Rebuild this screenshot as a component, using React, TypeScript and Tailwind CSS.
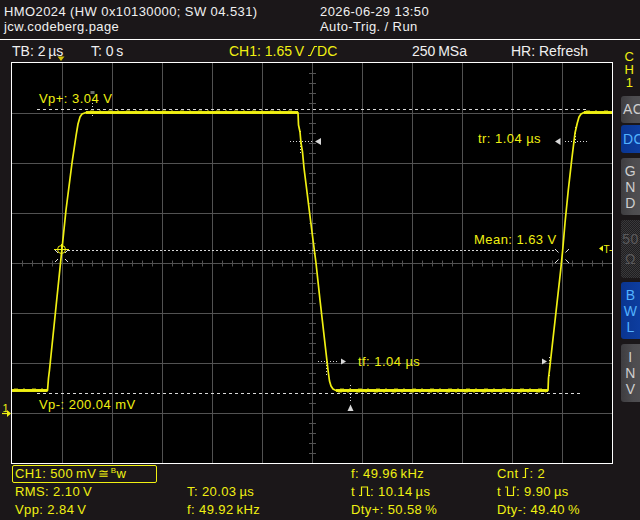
import type { ReactNode } from "react";

const YEL = "#f0f012";

type EdgeKind = "rise" | "pulsePos" | "pulseNeg" | "slope";

const EDGE_PATHS: Record<EdgeKind, string> = {
  rise: "M0.5 10.5 H3.5 V1.5 H6.5",
  pulsePos: "M0 10.5 H2.5 V2 H8.5 V10.5 H11",
  pulseNeg: "M0 2 H2.5 V10.5 H8.5 V2 H11",
  slope: "M0 10.5 H2.5 L6.5 1.5 H9",
};

function EdgeIcon({ kind, w = 11 }: { kind: EdgeKind; w?: number }) {
  return (
    <svg
      width={w}
      height={12}
      viewBox={`0 0 ${w} 12`}
      fill="none"
      stroke="currentColor"
      strokeWidth={1.2}
      className="inline-block align-[-1px]"
    >
      <path d={EDGE_PATHS[kind]} />
    </svg>
  );
}

// grey / blue softkeys on the right edge of the screen
function SideKey({ tone, h, mt, children }: { tone: "grey" | "blue" | "off"; h: number; mt: number; children: ReactNode }) {
  const toneClass =
    tone === "blue"
      ? "bg-[linear-gradient(90deg,#0a3590,#0f42a8)] text-[#52b2ff]"
      : tone === "grey"
        ? "bg-[linear-gradient(90deg,#3e3d40,#4d4c4f_40%,#545356)] text-[#cfcfcf]"
        : "bg-[image:repeating-conic-gradient(#3a393b_0_25%,#1f1e20_0_50%)] bg-[length:2px_2px] text-[#5a595b]";
  return (
    <div
      className={`ml-[1px] flex w-[30px] flex-col justify-center rounded-l-[3px] ${toneClass}`}
      style={{ height: h, marginTop: mt }}
    >
      {children}
    </div>
  );
}

function Stacked({ letters }: { letters: string }) {
  return (
    <div className="w-[19px] text-center text-[14px] leading-[16px]">
      {letters.split("").map((l, i) => (
        <div key={i}>{l}</div>
      ))}
    </div>
  );
}

const trace =
  "M12 390.5 L47.5 390.5 L48.5 378 L49.5 370 L60 268 L66 210 L72 163 L76 136 L78 124 L80 117 L82 114 L86 112.5 " +
  "L298 112.5 L298.5 125 L300 132 L301 143 L302.5 152 L304 168 L313 240 L316 263 L320 300 L328 370 L329.5 381 L331 386 L333 389 L336 390.5 " +
  "L548 390.5 L548.5 378 L549.5 370 L560.7 270 L562.7 250 L565 223 L568.3 190 L571.7 160 L575 133 L577.3 123 L579 117 L581 114 L584 112.5 L612 112.5";

function Scope() {
  const vLines = Array.from({ length: 11 }, (_, k) => 62.5 + 50 * k);
  const hLines = Array.from({ length: 7 }, (_, k) => 113.5 + 50 * k);
  const xTicks = Array.from({ length: 59 }, (_, i) => i + 1).filter((i) => i % 5 !== 0);
  const yTicks = Array.from({ length: 39 }, (_, j) => j + 1).filter((j) => j % 5 !== 0);
  const dot = "#d8d8d8";
  const label = { fontFamily: '"Liberation Sans", Arial, sans-serif', fontSize: 13, letterSpacing: 0.45, fill: YEL };

  return (
    <svg width={600} height={400} viewBox="12 63 600 400" className="block overflow-visible">
      <rect x={12} y={63} width={600} height={400} fill="#000" />
      {/* graticule */}
      <g stroke="#525252" strokeWidth={1}>
        {vLines.map((x) => (
          <line key={`v${x}`} x1={x} y1={63} x2={x} y2={463} />
        ))}
        {hLines.map((y) => (
          <line key={`h${y}`} x1={12} y1={y} x2={612} y2={y} />
        ))}
        {xTicks.map((i) => (
          <line key={`tx${i}`} x1={12.5 + 10 * i} y1={260.5} x2={12.5 + 10 * i} y2={266.5} />
        ))}
        {yTicks.map((j) => (
          <line key={`ty${j}`} x1={309} y1={63.5 + 10 * j} x2={316} y2={63.5 + 10 * j} />
        ))}
      </g>

      {/* cursor / measurement lines */}
      <g stroke={dot} strokeWidth={1} fill="none">
        <path d="M37 109.5 H586" strokeDasharray="3 3" />
        <path d="M68 250.5 H556" strokeDasharray="2 2" />
        <path d="M37 393.5 H581" strokeDasharray="3 3" />
        <path d="M565 141.5 H587" strokeDasharray="1 2" />
        <path d="M575.5 127 V145" strokeDasharray="1 2" />
        <path d="M290 141.5 H312" strokeDasharray="1 2" />
        <path d="M300.5 131 V153" strokeDasharray="1 2" />
        <path d="M326.5 356 V375" strokeDasharray="1 2" />
        <path d="M318 361.5 H339" strokeDasharray="1 2" />
        <path d="M350.5 385 V403" strokeDasharray="1 2" />
        <path d="M549.5 357 V378" strokeDasharray="1 2" />
        <path d="M92.5 103 V117" strokeDasharray="1 2" />
      </g>
      <g fill={dot}>
        <polygon points="555,141.5 560.5,138 560.5,145" />
        <polygon points="315,141.5 321,138 321,145" />
        <polygon points="347.5,411 350.5,404.5 353.5,411" />
        <polygon points="346,361.5 341,358.5 341,364.5" />
        <polygon points="547,361.5 542,358.5 542,364.5" />
        <rect x={90.5} y={91} width={4} height={3} fill="#6a6a6a" />
      </g>

      {/* trace */}
      <path d={trace} fill="none" stroke={YEL} strokeWidth={1.7} strokeLinejoin="round" />
      <g stroke={YEL} strokeWidth={3} opacity={0.95}>
        <line x1={12} y1={390.5} x2={47.5} y2={390.5} />
        <line x1={86} y1={112.5} x2={298} y2={112.5} />
        <line x1={336} y1={390.5} x2={548} y2={390.5} />
        <line x1={584} y1={112.5} x2={612} y2={112.5} />
      </g>
      <g stroke="#8c8c08" strokeWidth={1} strokeDasharray="4 5 2 7" opacity={0.7}>
        <line x1={14} y1={388.5} x2={46} y2={388.5} />
        <line x1={90} y1={110.5} x2={296} y2={110.5} />
        <line x1={338} y1={392.5} x2={546} y2={392.5} />
        <line x1={340} y1={388.5} x2={546} y2={388.5} />
        <line x1={586} y1={110.5} x2={611} y2={110.5} />
      </g>

      {/* mean crossings */}
      <g stroke="#e0e0e0" strokeWidth={1}>
        <path d="M55 250 L58 253 M68 250 L65 253 M55 262 L58 259 M68 262 L65 259" />
        <path d="M555 249 L558.5 252.5 M569 249 L565.5 252.5 M555 263 L558.5 259.5 M569 263 L565.5 259.5" />
      </g>
      <g stroke={YEL} strokeWidth={1} fill="none">
        <circle cx={61.5} cy={249.5} r={4} />
        <path d="M54 249.5 H69 M61.5 244 V255" />
      </g>

      {/* trigger level marker */}
      <polygon points="599,248.5 603,245.5 603,251.5" fill={YEL} />
      <text x={603.5} y={252.5} style={{ ...label, fontSize: 10, letterSpacing: 0 }}>
        T-
      </text>

      {/* channel 1 ground marker, left of the graticule */}
      <text x={2.5} y={411.5} style={{ ...label, fontSize: 11, letterSpacing: 0 }}>
        1
      </text>
      <path d="M2 413.5 H8" stroke={YEL} strokeWidth={1.2} />
      <polygon points="7,410 11,413.5 7,417" fill={YEL} />

      {/* trigger position marker, above the graticule */}
      <polygon points="57.5,56.5 64.5,56.5 61,61" fill="#d6c40a" />

      {/* measurement labels */}
      <text x={39} y={103} style={label}>
        Vp+: 3.04 V
      </text>
      <text x={478} y={143} style={label}>
        tr: 1.04 µs
      </text>
      <text x={474} y={244} style={label}>
        Mean: 1.63 V
      </text>
      <text x={358} y={366} style={label}>
        tf: 1.04 µs
      </text>
      <text x={39} y={409} style={label}>
        Vp-: 200.04 mV
      </text>
    </svg>
  );
}

export default function App() {
  return (
    <div className="h-[520px] w-[640px] overflow-hidden bg-[#1b1719] font-['Liberation_Sans',Arial,sans-serif] text-[13px] tracking-[0.4px] text-[#f0f0f0]">
      {/* header */}
      <div className="flex h-[40px] border-b border-white pt-[4px] leading-[15px]">
        <div className="w-[320px] pl-[4px]">
          <div>HMO2024 (HW 0x10130000; SW 04.531)</div>
          <div>jcw.codeberg.page</div>
        </div>
        <div>
          <div>2026-06-29 13:50</div>
          <div>Auto-Trig. / Run</div>
        </div>
      </div>

      <div className="flex">
        <div className="w-[620px]">
          <div className="flex h-[22px] items-center pl-[12px] text-[14px] tracking-normal">
            <span className="w-[79px]">{"TB: 2\u2009µs"}</span>
            <span className="w-[138px]">{"T: 0\u2009s"}</span>
            <span className="w-[183px] text-[#f0f012]">
              {"CH1: 1.65\u2009V "}
              <EdgeIcon kind="slope" w={9} />
              DC
            </span>
            <span className="w-[99px]">{"250\u2009MSa"}</span>
            <span>HR: Refresh</span>
          </div>
          <div className="ml-[11px] w-[602px] border border-white">
            <Scope />
          </div>
        </div>

        {/* channel softkeys */}
        <div className="flex w-[20px] flex-col pt-[10px]">
          <div className="w-[19px] text-center text-[13px] leading-[13px] text-[#f0f012]">
            <div>C</div>
            <div>H</div>
            <div>1</div>
          </div>
          <SideKey tone="grey" h={27} mt={7}>
            <span className="pl-[2px] text-[14px]">AC</span>
          </SideKey>
          <SideKey tone="blue" h={28} mt={2}>
            <span className="pl-[2px] text-[14px]">DC</span>
          </SideKey>
          <SideKey tone="grey" h={57} mt={5}>
            <Stacked letters="GND" />
          </SideKey>
          <SideKey tone="off" h={58} mt={5}>
            <div className="w-[19px] text-center text-[14px] leading-[20px]">
              <div>50</div>
              <div>Ω</div>
            </div>
          </SideKey>
          <SideKey tone="blue" h={57} mt={4}>
            <Stacked letters="BWL" />
          </SideKey>
          <SideKey tone="grey" h={58} mt={5}>
            <Stacked letters="INV" />
          </SideKey>
        </div>
      </div>

      {/* measurement readout */}
      <div className="flex flex-col pl-[12px] pt-[1px] text-[#f0f012]">
        <div className="flex h-[18px] items-center">
          <div className="w-[175px]">
            <div className="flex h-[18px] w-[145px] items-center rounded-[2px] border border-[#f0f012] pl-[2px]">
              {"CH1: 500\u2009mV "}
              <span className="ml-[2px]">≅</span>
              <span className="ml-[1px] self-start pt-[1px] text-[8px] leading-[8px]">B</span>
              <span>w</span>
            </div>
          </div>
          <div className="w-[164px]" />
          <div className="w-[146px]">{"f: 49.96\u2009kHz"}</div>
          <div>
            Cnt <EdgeIcon kind="rise" w={7} />: 2
          </div>
        </div>
        <div className="flex h-[18px] items-center">
          <div className="w-[175px] pl-[3px]">{"RMS: 2.10\u2009V"}</div>
          <div className="w-[164px]">{"T: 20.03\u2009µs"}</div>
          <div className="w-[146px]">
            t <EdgeIcon kind="pulsePos" />
            {": 10.14\u2009µs"}
          </div>
          <div>
            t <EdgeIcon kind="pulseNeg" />
            {": 9.90\u2009µs"}
          </div>
        </div>
        <div className="flex h-[18px] items-center">
          <div className="w-[175px] pl-[3px]">{"Vpp: 2.84\u2009V"}</div>
          <div className="w-[164px]">{"f: 49.92\u2009kHz"}</div>
          <div className="w-[146px]">{"Dty+: 50.58\u2009%"}</div>
          <div>{"Dty-: 49.40\u2009%"}</div>
        </div>
      </div>
    </div>
  );
}
